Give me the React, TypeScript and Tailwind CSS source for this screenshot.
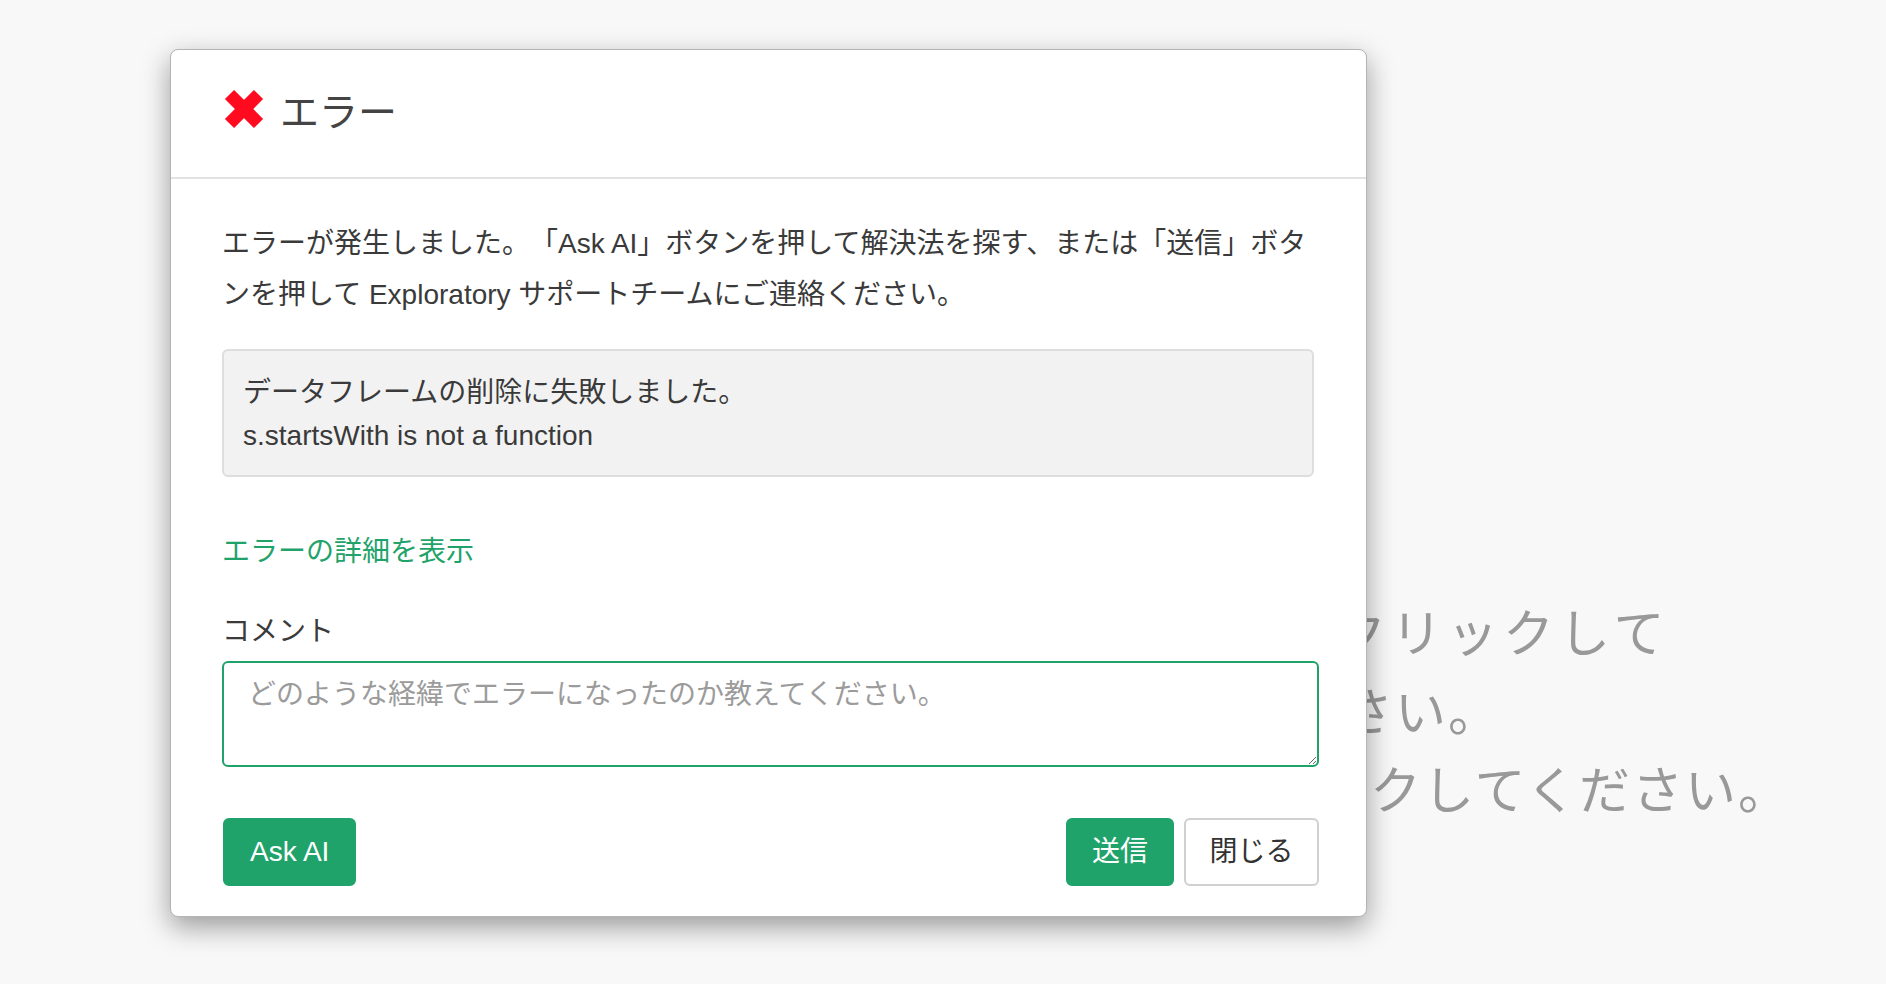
import React from "react";

const ErrorIcon: React.FC = () => (
  <svg width="40" height="40" viewBox="0 0 40 40" aria-hidden="true">
    <line x1="5.5" y1="5.5" x2="34.5" y2="34.5" stroke="#ff0a1e" strokeWidth="13" />
    <line x1="34.5" y1="5.5" x2="5.5" y2="34.5" stroke="#ff0a1e" strokeWidth="13" />
  </svg>
);

const App: React.FC = () => {
  return (
    <div className="relative h-[984px] w-[1886px] overflow-hidden bg-[#f8f8f8] font-['Liberation_Sans','Noto_Sans_CJK_JP',sans-serif] [text-spacing-trim:space-all]">
      {/* page content behind the dialog */}
      <div className="pt-[590px] font-['Noto_Sans_CJK_JP',sans-serif] text-[51px] tracking-[2px] text-[#999999] whitespace-nowrap">
        <div className="ml-[1111px] leading-[80px] tracking-[5px]">タブを右クリックして</div>
        <div className="ml-[1027px] leading-[78px]">削除してください。</div>
        <div className="ml-[999px] leading-[78px]">ボタンをクリックしてください。</div>
      </div>

      {/* dialog */}
      <div className="absolute left-[170px] top-[49px] w-[1197px] rounded-[8px] border border-[#b4b4b4] bg-white shadow-[0_10px_28px_rgba(0,0,0,0.38)]">
        <div className="flex h-[129px] items-center gap-[16px] border-b-2 border-[#e2e2e2] pb-[9px] pl-[53px]">
          <ErrorIcon />
          <span className="text-[39px] text-[#444444] font-['Noto_Sans_CJK_JP',sans-serif]">エラー</span>
        </div>

        <div className="pl-[51px] pr-[47px] pb-[30px] text-[28px] text-[#3a3a3a]">
          <p className="mt-[39px] leading-[51px] whitespace-nowrap">
            エラーが発生しました。「Ask AI」ボタンを押して解決法を探す、または「送信」ボタ
            <br />
            ンを押して Exploratory サポートチームにご連絡ください。
          </p>

          <div className="mt-[29px] mr-[5px] rounded-[6px] border-2 border-[#dedede] bg-[#f2f2f2] px-[19px] pt-[20px] pb-[18px] leading-[43px]">
            <div>データフレームの削除に失敗しました。</div>
            <div>s.startsWith is not a function</div>
          </div>

          <div className="mt-[55px] leading-[40px] text-[#1fa36b] cursor-pointer">エラーの詳細を表示</div>

          <div className="mt-[40px] leading-[40px] text-[#3a3a3a]">コメント</div>

          <textarea
            readOnly
            placeholder="どのような経緯でエラーになったのか教えてください。"
            className="mt-[9px] block h-[106px] w-full rounded-[6px] border-2 border-[#1fa36b] bg-white px-[24px] py-[12px] text-[28px] leading-[40px] text-[#333] outline-none placeholder:text-[#9b9b9b]"
          />

          <div className="mt-[51px] flex items-center">
            <button className="ml-[1px] h-[68px] rounded-[6px] border-2 border-[#1fa36b] bg-[#1fa36b] px-[25px] text-[28px] text-white">
              Ask AI
            </button>
            <div className="flex-1" />
            <button className="h-[68px] w-[108px] rounded-[6px] border-2 border-[#1fa36b] bg-[#1fa36b] text-[28px] text-white">
              送信
            </button>
            <button className="ml-[10px] h-[68px] w-[135px] rounded-[6px] border-2 border-[#d0d0d0] bg-white text-[28px] text-[#333333]">
              閉じる
            </button>
          </div>
        </div>
      </div>
    </div>
  );
};

export default App;
